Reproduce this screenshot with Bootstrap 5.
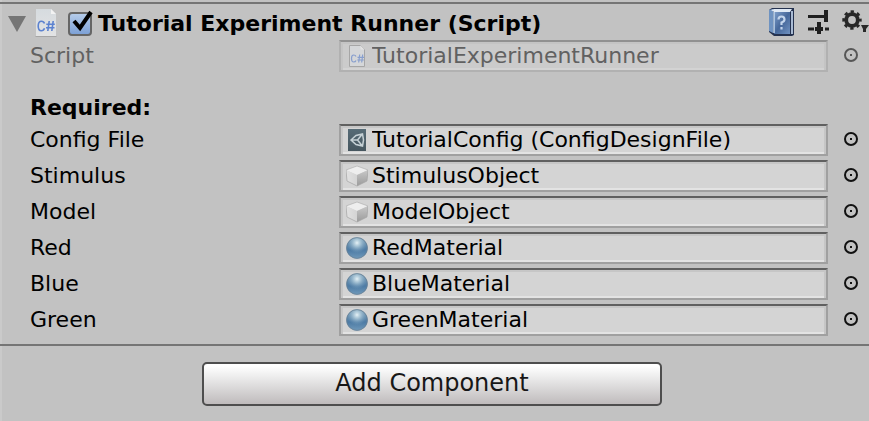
<!DOCTYPE html>
<html lang="en">
<head>
<meta charset="utf-8">
<meta name="viewport" content="width=device-width, initial-scale=1">
<title>Inspector</title>
<link href="https://cdn.jsdelivr.net/npm/bootstrap@5.3.0/dist/css/bootstrap.min.css" rel="stylesheet">
<style>
body { background: linear-gradient(90deg, #cacaca 2px, #c2c2c2 2px); color: #000; font: 22px/32px "DejaVu Sans", sans-serif; }
svg { display: block; flex: none; }
.component { border: solid #757575; border-width: 2px 0; margin-top: 2px; padding-bottom: 8px; }
.component-head { height: 36px; padding: 0 0 0 8px; }
.component-head h1, .section-title { font-size: 22px; line-height: 32px; font-weight: 700; margin: 0; }
.bare { background: none; border: 0; padding: 0; color: #000; }
.enable { appearance: none; width: 24px; height: 24px; margin: 0; border: 2px solid #666; border-radius: 4px; background: linear-gradient(#b4cbe9, #7da1d6); }
.enable-wrap { width: 26px; height: 30px; margin-left: 10px; }
.enable-tick { left: 3px; top: 2px; pointer-events: none; }
.head-tools { gap: 12px; }
.props { padding-left: 30px; }
.prop-row { margin-bottom: 4px; }
.prop-row:last-child { margin-bottom: 0; }
.prop-label { width: 309px; flex: none; }
.object-field { height: 32px; min-width: 0; background: #d4d4d4; border: 2px solid #a0a0a0; border-top-color: #606060; padding-left: 5px; box-shadow: inset 2px 2px #c6c6c6, inset -2px 0 #c6c6c6, inset 0 -2px #e3e3e3; }
.object-field input { outline: 0; min-width: 0; height: 28px; line-height: 28px; margin-left: 4px; }
.picker { width: 41px; padding: 0 0 2px 15px; }
.is-off .prop-label, .is-off input { color: #616161; }
.is-off .object-field { background: #cbcbcb; border-color: #b1b1b1; border-top-color: #919191; box-shadow: inset 2px 2px #c4c4c4, inset -2px 0 #c4c4c4, inset 0 -2px #d3d3d3; }
.is-off svg { opacity: .6; }
.section-title { margin-top: 20px; }
.add-component { width: 460px; max-width: 100%; height: 44px; margin: 16px 5px 0 0; border: 2px solid #4e4e4e; border-radius: 5px; background: linear-gradient(#fff 5%, #eee 30%, #bfbbbc); color: #171717; font-size: 24px; line-height: 36px; padding: 0 0 2px; }
</style>
</head>
<body>
<svg width="0" height="0" class="position-absolute" aria-hidden="true">
  <defs>
    <linearGradient id="gPage" x2="0" y2="1"><stop stop-color="#d6dbdf"/><stop offset="1" stop-color="#e2e3e4"/></linearGradient>
    <linearGradient id="gBook" x2="1" y2="1"><stop stop-color="#7f9fca"/><stop offset=".5" stop-color="#46689b"/><stop offset="1" stop-color="#6f91c0"/></linearGradient>
    <linearGradient id="gBall" x2="0" y2="1"><stop stop-color="#7fa2ba"/><stop offset=".6" stop-color="#4d7ba5"/><stop offset="1" stop-color="#7099ba"/></linearGradient>
    <radialGradient id="gShine" cx=".5" cy=".25" r=".5"><stop stop-color="#e6f2f6"/><stop offset=".35" stop-color="#b5cfdd" stop-opacity=".8"/><stop offset="1" stop-color="#7fa5c0" stop-opacity="0"/></radialGradient>
    <linearGradient id="gAsset" x2="0" y2="1"><stop stop-color="#566b76"/><stop offset="1" stop-color="#46565f"/></linearGradient>
    <linearGradient id="gLeft" x2="1" y2="0"><stop stop-color="#e2e2e2"/><stop offset="1" stop-color="#d4d4d4"/></linearGradient>
    <linearGradient id="gRight" x2="0" y2="1"><stop stop-color="#c8c8c8"/><stop offset="1" stop-color="#9b9b9b"/></linearGradient>
  </defs>
  <symbol id="script" viewBox="0 0 22 30"><path d="M1 1h15l5 5v22H1z" fill="url(#gPage)"/><path d="M16 1v5h5z" fill="#f3f3f3"/><path d="M.5 28.500h21" stroke="#a5a5a5"/><path d="M9.500 15.500Q8.700 13.200 6.400 13.200Q3.200 13.200 3.200 18T6.400 22.800Q8.700 22.800 9.500 20.300M14.200 13l-1.400 10M18.200 13l-1.400 10M11.300 16.300h8.500M11 19.700h8.500" fill="none" stroke="#5c82d0" stroke-width="1.600"/></symbol>
  <symbol id="script-small" viewBox="0 0 16 22"><path d="M.5.500h11l4 4v17H.5z" fill="#dde0e3" stroke="#8f8f8f"/><path d="M11.500.500v4h4z" fill="#f3f3f3"/><path d="M7 11.500Q6.500 10 4.700 10Q2.500 10 2.500 13.500T4.700 17Q6.500 17 7 15.500M10.700 9.500l-1 8M13.700 9.500l-1 8M8.500 12.300h6.500M8.300 15h6.500" fill="none" stroke="#5c82d0" stroke-width="1.200"/></symbol>
  <symbol id="asset" viewBox="0 0 18 22"><path d="M0 0h18v22H0z" fill="url(#gAsset)"/><path d="M3 11 8 6.500 14.500 5 15.500 11 14.500 17 8 15.500zM3 11h6.500M9.500 11 14 5.500M9.500 11 14 16.500" fill="none" stroke="#c6d1d6" stroke-width="1.500"/></symbol>
  <symbol id="cube" viewBox="0 0 22 22"><path d="M0 5 11 1l11 4-11 5z" fill="#eee"/><path d="M0 5l11 5v11L1 16z" fill="url(#gLeft)"/><path d="M22 5l-11 5v11l10-5z" fill="url(#gRight)"/><path d="M0 5 1 16l10 5 10-5 1-11" fill="none" stroke="#a4a4a4" stroke-width=".7"/><path d="M0 5 11 1l11 4" fill="none" stroke="#aaa" stroke-width=".6"/></symbol>
  <symbol id="ball" viewBox="0 0 22 22"><circle cx="11" cy="11" r="10.700" fill="url(#gBall)"/><circle cx="11" cy="11" r="10.200" fill="url(#gShine)"/><circle cx="11" cy="11" r="10.400" fill="none" stroke="#6b7f90" stroke-width=".7"/></symbol>
  <symbol id="target" viewBox="0 0 16 16"><circle cx="8" cy="8" r="6" fill="none" stroke="#111" stroke-width="2"/><path d="M7 7h2v2H7z" fill="#111"/></symbol>
</svg>

<main>
  <section class="component">
    <header class="component-head d-flex align-items-start">
      <button class="bare pt-2" type="button" aria-label="Collapse component"><svg width="18" height="24"><path d="M0 4h18L9 20z" fill="#757575"/></svg></button>
      <svg class="ms-2 mt-1" width="24" height="30"><use href="#script" x="1" width="22" height="30"/></svg>
      <div class="enable-wrap position-relative me-1 pt-1">
        <input class="enable d-block mt-1" type="checkbox" id="enabled" checked>
        <svg class="enable-tick position-absolute" width="23" height="28"><path d="M3 15 9 22 20 6" fill="none" stroke="#000" stroke-width="4"/></svg>
      </div>
      <h1 class="pt-1"><label for="enabled">Tutorial Experiment Runner (Script)</label></h1>
      <div class="head-tools d-flex ms-auto mt-1">
        <button class="bare" type="button" aria-label="Help"><svg width="28" height="28"><path d="M1 2 4 0h22v27l-2 1H6L1 24z" fill="#25324f"/><path d="M1 2 5 1v24l-4-2z" fill="#6f93c1"/><path d="M3 2 6 1h18l-2 3H6z" fill="#dfe9f5"/><path d="M6 4h16v22H6z" fill="url(#gBook)"/><path d="M6 4v21" stroke="#c2d8f0" stroke-width="1.500"/><path d="M24 3v23" stroke="#a9bbd4" stroke-width="2"/><path d="M10.500 11.500Q10.500 8.500 13.500 8.500T16.500 11.500Q16.500 13.500 13.500 14.500V17M13.500 19v2.500" fill="none" stroke="#c3d5ec" stroke-width="2.200"/></svg></button>
        <button class="bare" type="button" aria-label="Presets"><svg width="22" height="28"><path d="M0 8.500h17M0 21h6M17 21h4" stroke="#202020" stroke-width="3"/><path d="M16 2h4v12h-4zM9 14h4v12H9zM7 19h8v4H7z" fill="#202020"/></svg></button>
        <button class="bare" type="button" aria-label="Component settings"><svg width="27" height="28"><circle cx="10" cy="12" r="5.800" fill="none" stroke="#282828" stroke-width="3.800"/><circle cx="10" cy="12" r="8.200" fill="none" stroke="#282828" stroke-width="3" stroke-dasharray="3.220 3.220" stroke-dashoffset="1.610"/><path d="M19 17h8l-3 4v3h-3v-3z" fill="#282828"/></svg></button>
      </div>
    </header>

    <div class="props">
      <div class="prop-row is-off d-flex">
        <label class="prop-label" for="script-ref">Script</label>
        <div class="object-field d-flex align-items-center flex-grow-1"><svg width="22" height="22"><use href="#script-small" x="3" width="16" height="22"/></svg><input class="bare flex-grow-1" id="script-ref" type="text" value="TutorialExperimentRunner" readonly disabled></div>
        <button class="bare picker" type="button" aria-label="Select script" disabled><svg width="16" height="16"><use href="#target"/></svg></button>
      </div>

      <h2 class="section-title">Required:</h2>

      <div class="prop-row d-flex">
        <label class="prop-label" for="config">Config File</label>
        <div class="object-field d-flex align-items-center flex-grow-1"><svg width="22" height="22"><use href="#asset" x="2" width="18" height="22"/></svg><input class="bare flex-grow-1" id="config" type="text" value="TutorialConfig (ConfigDesignFile)" readonly></div>
        <button class="bare picker" type="button" aria-label="Select config file"><svg width="16" height="16"><use href="#target"/></svg></button>
      </div>
      <div class="prop-row d-flex">
        <label class="prop-label" for="stimulus">Stimulus</label>
        <div class="object-field d-flex align-items-center flex-grow-1"><svg width="22" height="22"><use href="#cube"/></svg><input class="bare flex-grow-1" id="stimulus" type="text" value="StimulusObject" readonly></div>
        <button class="bare picker" type="button" aria-label="Select stimulus"><svg width="16" height="16"><use href="#target"/></svg></button>
      </div>
      <div class="prop-row d-flex">
        <label class="prop-label" for="model">Model</label>
        <div class="object-field d-flex align-items-center flex-grow-1"><svg width="22" height="22"><use href="#cube"/></svg><input class="bare flex-grow-1" id="model" type="text" value="ModelObject" readonly></div>
        <button class="bare picker" type="button" aria-label="Select model"><svg width="16" height="16"><use href="#target"/></svg></button>
      </div>
      <div class="prop-row d-flex">
        <label class="prop-label" for="red">Red</label>
        <div class="object-field d-flex align-items-center flex-grow-1"><svg width="22" height="22"><use href="#ball"/></svg><input class="bare flex-grow-1" id="red" type="text" value="RedMaterial" readonly></div>
        <button class="bare picker" type="button" aria-label="Select red material"><svg width="16" height="16"><use href="#target"/></svg></button>
      </div>
      <div class="prop-row d-flex">
        <label class="prop-label" for="blue">Blue</label>
        <div class="object-field d-flex align-items-center flex-grow-1"><svg width="22" height="22"><use href="#ball"/></svg><input class="bare flex-grow-1" id="blue" type="text" value="BlueMaterial" readonly></div>
        <button class="bare picker" type="button" aria-label="Select blue material"><svg width="16" height="16"><use href="#target"/></svg></button>
      </div>
      <div class="prop-row d-flex">
        <label class="prop-label" for="green">Green</label>
        <div class="object-field d-flex align-items-center flex-grow-1"><svg width="22" height="22"><use href="#ball"/></svg><input class="bare flex-grow-1" id="green" type="text" value="GreenMaterial" readonly></div>
        <button class="bare picker" type="button" aria-label="Select green material"><svg width="16" height="16"><use href="#target"/></svg></button>
      </div>
    </div>
  </section>
  <div class="d-flex justify-content-center">
    <button class="btn add-component" type="button">Add Component</button>
  </div>
</main>
<script src="https://cdn.jsdelivr.net/npm/bootstrap@5.3.0/dist/js/bootstrap.bundle.min.js"></script>
</body>
</html>
